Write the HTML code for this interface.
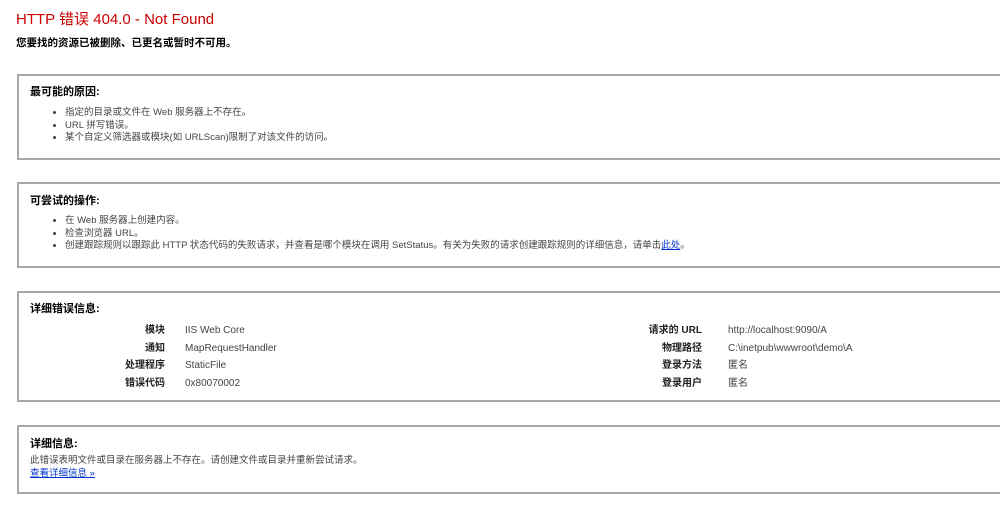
<!DOCTYPE html>
<html><head><meta charset="utf-8"><style>
body{margin:0;width:1000px;height:507px;background:#fff;font-family:"Liberation Sans","Noto Sans CJK SC",sans-serif;color:#000;position:relative;overflow:hidden}
.a{position:absolute;white-space:nowrap}
h1{position:absolute;left:16px;top:8px;margin:0;font-size:15px;color:#cc0000;font-weight:normal;white-space:nowrap}
.sub{left:16px;top:35px;font-size:10.5px;font-weight:bold}
.box{position:absolute;left:17px;width:1000px;border:2px solid #a8a8a8;border-right:none;box-sizing:border-box}
.h{font-size:11px;font-weight:bold;color:#000}
.t{font-size:9.5px;color:#444}
ul{position:absolute;left:35px;margin:0;padding:0 0 0 11px;font-size:9.5px;color:#444;line-height:12.5px}
li{white-space:nowrap}
a{color:#0033cc;text-decoration:underline}
.lbl{font-size:10px;font-weight:bold;text-align:right;color:#222}
.val{font-size:10px;color:#444}
</style></head><body>
<h1>HTTP 错误 404.0 - Not Found</h1>
<div class="a sub">您要找的资源已被删除、已更名或暂时不可用。</div>

<div class="box" style="top:74px;height:86px">
<div class="a h" style="left:11px;top:7px">最可能的原因:</div>
<ul style="top:31px"><li>指定的目录或文件在 Web 服务器上不存在。</li><li>URL 拼写错误。</li><li>某个自定义筛选器或模块(如 URLScan)限制了对该文件的访问。</li></ul>
</div>

<div class="box" style="top:182px;height:86px">
<div class="a h" style="left:11px;top:8px">可尝试的操作:</div>
<ul style="top:31px"><li>在 Web 服务器上创建内容。</li><li>检查浏览器 URL。</li><li>创建跟踪规则以跟踪此 HTTP 状态代码的失败请求，并查看是哪个模块在调用 SetStatus。有关为失败的请求创建跟踪规则的详细信息，请单击<a>此处</a>。</li></ul>
</div>

<div class="box" style="top:291px;height:111px">
<div class="a h" style="left:11px;top:7px">详细错误信息:</div>
<div class="a lbl" style="right:852px;top:29px;line-height:17.5px">模块<br>通知<br>处理程序<br>错误代码</div>
<div class="a val" style="left:166px;top:29px;line-height:17.5px">IIS Web Core<br>MapRequestHandler<br>StaticFile<br>0x80070002</div>
<div class="a lbl" style="right:315px;top:29px;line-height:17.5px">请求的 URL<br>物理路径<br>登录方法<br>登录用户</div>
<div class="a val" style="left:709px;top:29px;line-height:17.5px">http://localhost:9090/A<br>C:\inetpub\wwwroot\demo\A<br>匿名<br>匿名</div>
</div>

<div class="box" style="top:425px;height:69px">
<div class="a h" style="left:11px;top:8px">详细信息:</div>
<div class="a t" style="left:11px;top:28px;line-height:12.5px">此错误表明文件或目录在服务器上不存在。请创建文件或目录并重新尝试请求。<br><a>查看详细信息 »</a></div>
</div>
</body></html>
